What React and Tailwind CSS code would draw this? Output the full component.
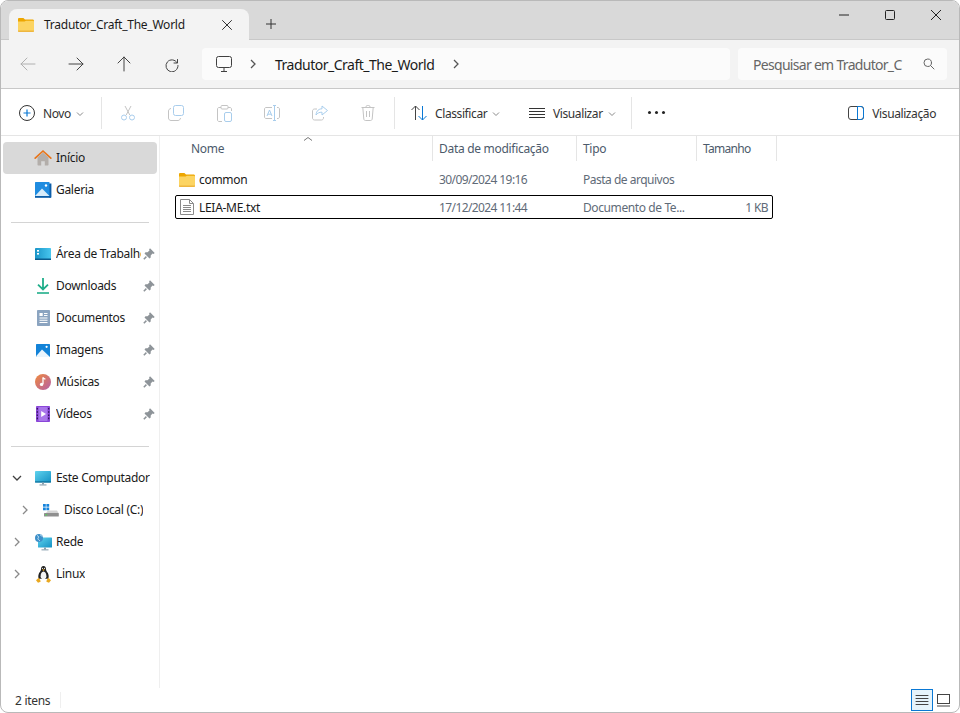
import React from "react";

const Line = ({ d, size = 16, color = "#4a4a4a", w = 1, vb = 16 }) => (
  <svg width={size} height={size} viewBox={`0 0 ${vb} ${vb}`} fill="none" stroke={color} strokeWidth={w} strokeLinecap="round" strokeLinejoin="round" className="block shrink-0">
    <path d={d} />
  </svg>
);

const Folder = ({ w = 16, h = 14 }) => (
  <svg width={w} height={h} viewBox="0 0 16 14" className="block shrink-0">
    <path d="M0 1.2C0 .5.5 0 1.2 0h4.2l1.6 1.6H14.6c.8 0 1.4.6 1.4 1.4V5H0z" fill="#eda600" />
    <path d="M0 3.6h6.6L8 2.8h6.8c.7 0 1.2.5 1.2 1.2v8.8c0 .7-.5 1.2-1.2 1.2H1.2C.5 14 0 13.5 0 12.8z" fill="#fcd462" />
    <path d="M0 12.6V13c0 .5.5 1 1.2 1h13.6c.7 0 1.2-.5 1.2-1v-.4z" fill="#eeb63f" />
  </svg>
);

const Chevron = ({ color = "#8a8a8a" }) => (
  <svg width="8" height="8" viewBox="0 0 8 8" fill="none" stroke={color} strokeWidth="1" className="block shrink-0">
    <path d="M1 2.5 4 5.5 7 2.5" />
  </svg>
);

const Home = () => (
  <svg width="18" height="18" viewBox="0 0 18 18" className="block shrink-0">
    <path d="M3.5 8.5 9 3.5l5.5 5v7.2c0 .4-.3.8-.8.8h-2.9v-4.2H7.2v4.2H4.3c-.5 0-.8-.4-.8-.8z" fill="#b3aeaa" />
    <path d="M1.2 9.2 9 2l7.8 7.2" fill="none" stroke="#e8751a" strokeWidth="1.7" strokeLinecap="round" strokeLinejoin="round" />
  </svg>
);

const Gallery = () => (
  <svg width="17" height="16" viewBox="0 0 17 16" className="block shrink-0">
    <rect x="14" y="1.5" width="2.4" height="14" fill="#0c5da8" />
    <rect x="0" y="14" width="16" height="1.8" fill="#0c5da8" />
    <rect x="0" y="0" width="14.5" height="14" rx=".6" fill="#1f8ce0" />
    <path d="M0 14 7 6.5 14.5 14z" fill="#d8ecfa" />
    <circle cx="11" cy="3.5" r="1.2" fill="#fff" />
  </svg>
);

const Desktop = () => (
  <svg width="16" height="12" viewBox="0 0 16 12" className="block shrink-0">
    <defs>
      <linearGradient id="dk" x1="0" y1="0" x2="1" y2="0">
        <stop offset="0" stopColor="#1a95c8" />
        <stop offset="1" stopColor="#48c6ee" />
      </linearGradient>
    </defs>
    <rect width="16" height="11.5" rx=".8" fill="url(#dk)" />
    <rect x="2" y="2" width="2" height="1.6" fill="#fff" />
    <rect x="2" y="5" width="2" height="1.6" fill="#fff" />
    <rect y="10.5" width="16" height="1.5" fill="#0b5c8e" />
  </svg>
);

const Download = () => (
  <svg width="14" height="16" viewBox="0 0 14 16" fill="none" stroke="#1fae8a" strokeWidth="1.8" className="block shrink-0">
    <path d="M7 0v11M2 6.6 7 11.4l5-4.8" />
    <path d="M1 15h12" stroke="#1fae8a" strokeWidth="1.6" />
  </svg>
);

const Docs = () => (
  <svg width="13" height="16" viewBox="0 0 13 16" className="block shrink-0">
    <rect width="13" height="16" rx=".8" fill="#8ba4c0" />
    <path d="M2.5 3h3.2v3H2.5zM7 3h3.5v1H7zM7 5h3.5v1H7zM2.5 7.5h8v1h-8zM2.5 9.8h8v1h-8zM2.5 12h8v1h-8z" fill="#fff" />
  </svg>
);

const Images = () => (
  <svg width="14" height="13" viewBox="0 0 14 13" className="block shrink-0">
    <rect width="14" height="13" rx=".6" fill="#1383d8" />
    <path d="M0 12.2 6 5.4 14 13H.6z" fill="#eaf5fd" />
    <circle cx="10.6" cy="2.8" r="1.1" fill="#fff" />
  </svg>
);

const Music = () => (
  <svg width="16" height="16" viewBox="0 0 16 16" className="block shrink-0">
    <defs>
      <linearGradient id="mu" x1="0" y1="0" x2="1" y2="1">
        <stop offset="0" stopColor="#f08a3c" />
        <stop offset="1" stopColor="#b45fa8" />
      </linearGradient>
    </defs>
    <circle cx="8" cy="8" r="8" fill="url(#mu)" />
    <path d="M8 3.5v6.6" stroke="#fff" strokeWidth="1.3" />
    <circle cx="6.6" cy="10.4" r="1.7" fill="#fff" />
    <path d="M8 3.5c.5 1.3 1.6 1.5 2.4 1.7" stroke="#fff" strokeWidth="1.3" fill="none" />
  </svg>
);

const Videos = () => (
  <svg width="14" height="16" viewBox="0 0 14 16" className="block shrink-0">
    <rect width="14" height="16" rx=".8" fill="#8a46d8" />
    <rect x="2.6" y="1" width="8.8" height="14" fill="#a975ea" />
    <path d="M5.2 5v6l4.8-3z" fill="#fff" />
    <path d="M.7 2h1.2v1.6H.7zM.7 5.2h1.2v1.6H.7zM.7 8.4h1.2V10H.7zM.7 11.6h1.2v1.6H.7zM12.1 2h1.2v1.6h-1.2zM12.1 5.2h1.2v1.6h-1.2zM12.1 8.4h1.2V10h-1.2zM12.1 11.6h1.2v1.6h-1.2z" fill="#2a1050" />
  </svg>
);

const Computer = () => (
  <svg width="16" height="15" viewBox="0 0 16 15" className="block shrink-0">
    <defs>
      <linearGradient id="pc" x1="0" y1="0" x2="1" y2="1">
        <stop offset="0" stopColor="#5fd3ee" />
        <stop offset="1" stopColor="#1591c4" />
      </linearGradient>
    </defs>
    <rect width="16" height="11.5" rx=".8" fill="url(#pc)" />
    <rect y="10.4" width="16" height="1.1" fill="#0d6a96" />
    <rect x="7" y="11.5" width="2" height="2" fill="#8aa0ae" />
    <rect x="4.5" y="13.4" width="7" height="1.1" fill="#8aa0ae" />
  </svg>
);

const Disk = () => (
  <svg width="16" height="13" viewBox="0 0 16 13" className="block shrink-0">
    <path d="M0 0h2.8v2.8H0zM3.4 0h2.8v2.8H3.4zM0 3.4h2.8v2.8H0zM3.4 3.4h2.8v2.8H3.4z" fill="#1684dc" />
    <path d="M3 9 5 6.5h9L15.500 9z" fill="#d4d4d4" />
    <rect x="1" y="9" width="14.800" height="3.400" rx=".5" fill="#8f8f8f" />
    <rect x="2.500" y="10.200" width="1.600" height="1.200" fill="#4ade50" />
  </svg>
);

const Network = () => (
  <svg width="17" height="17" viewBox="0 0 17 17" className="block shrink-0">
    <defs>
      <linearGradient id="nt" x1="0" y1="0" x2="1" y2="1">
        <stop offset="0" stopColor="#5fd3ee" />
        <stop offset="1" stopColor="#1591c4" />
      </linearGradient>
    </defs>
    <rect x="3" y="3.500" width="14" height="10" rx=".6" fill="url(#nt)" />
    <rect x="9" y="13.500" width="2" height="2" fill="#8aa0ae" />
    <rect x="6.500" y="15.300" width="7" height="1.100" fill="#8aa0ae" />
    <circle cx="4" cy="4" r="4" fill="#3d8fc9" />
    <path d="M2 1.500c1.500.6 2 1.400 1.200 2.400s.4 2 1.600 2.800M5 .6c.8 1 1.600 1.400 2.600 1.600" stroke="#d4ecf8" strokeWidth=".9" fill="none" />
  </svg>
);

const Tux = () => (
  <svg width="15" height="17" viewBox="0 0 15 17" className="block shrink-0">
    <path d="M7.500 0C5.600 0 5 1.500 5 3.200c0 1.400-1.200 2.400-2 4C2.200 9 2 11 2.800 12.800h9.400C13 11 12.800 9 12 7.200c-.8-1.600-2-2.600-2-4C10 1.500 9.400 0 7.500 0z" fill="#222" />
    <path d="M7.500 5.500C5.600 5.500 4.600 8 4.600 10.200c0 1.600 1 3 2.900 3s2.900-1.400 2.900-3C10.400 8 9.400 5.500 7.500 5.500z" fill="#f4f4f4" />
    <path d="M6.200 3.800 7.500 3.200l1.300.6-1.300 1.200z" fill="#e9a820" />
    <circle cx="6.500" cy="2.300" r=".6" fill="#fff" />
    <circle cx="8.500" cy="2.300" r=".6" fill="#fff" />
    <path d="M0 14.200 2.800 11.800l1.600 2.600.2 1.400-2.600 1zM15 14.200 12.200 11.800l-1.600 2.600-.2 1.400 2.600 1z" fill="#e9a820" />
  </svg>
);

const Pin = () => (
  <svg width="12" height="12" viewBox="0 0 12 12" className="block shrink-0">
    <path d="M7 .3 11.700 5 10.500 5.900 9.500 5.500 7.700 7.500 7.700 9.500 6.500 10.500 1.500 5.500 2.500 4.300 4.500 4.300 6.500 2.500 6.100 1.500z" fill="#8e9499" />
    <path d="M3.400 8.600.8 11.200" stroke="#8e9499" strokeWidth="1.500" />
  </svg>
);

const SideRight = ({ color = "#7a7a7a" }) => (
  <svg width="8" height="12" viewBox="0 0 8 12" fill="none" stroke={color} strokeWidth="1.300" className="block">
    <path d="M2 2 6 6 2 10" />
  </svg>
);

const SideDown = () => (
  <svg width="12" height="8" viewBox="0 0 12 8" fill="none" stroke="#404040" strokeWidth="1.300" className="block">
    <path d="M2 2 6 6 10 2" />
  </svg>
);

function NavItem({ icon, label, pinned, arrow, indent, active }) {
  return (
    <div className={`flex h-8 items-center rounded pl-[2px] ${active ? "bg-[#d9d9d9]" : ""} ${indent ? "ml-2" : ""}`}>
      <div className="flex h-8 w-6 shrink-0 items-center justify-center">
        {arrow === "right" && <SideRight color="#8a8a8a" />}
        {arrow === "down" && <SideDown />}
      </div>
      <div className="ml-[6px] flex w-4 shrink-0 items-center justify-center">{icon}</div>
      <span className={`ml-[5px] overflow-hidden whitespace-nowrap text-[12px] text-[#1a1a1a] ${pinned ? "w-[85px]" : ""}`}>{label}</span>
      {pinned && <span className="ml-[2px]"><Pin /></span>}
    </div>
  );
}

const Divider = () => <div className="mb-[15px] ml-2 mr-2 mt-4 h-px bg-[#d4d4d4]" />;
const ToolSep = () => <div className="h-8 w-px shrink-0 bg-[#e5e5e5]" />;

const ToolSlot = ({ children }) => <div className="flex h-full w-12 shrink-0 items-center justify-center">{children}</div>;

const D = "#a8cdec";
const G = "#c4c4c4";

function Cut() {
  return (
    <svg width="16" height="16" viewBox="0 0 16 16" fill="none" strokeWidth="1" className="block">
      <path d="M5 1 9.800 10M11 1 6.200 10" stroke={G} />
      <circle cx="4" cy="12.500" r="2.500" stroke={D} />
      <circle cx="12" cy="12.500" r="2.500" stroke={D} />
    </svg>
  );
}
function Copy() {
  return (
    <svg width="16" height="16" viewBox="0 0 16 16" fill="none" strokeWidth="1" className="block">
      <rect x="5.500" y=".5" width="10" height="10" rx="2" stroke={D} />
      <path d="M3 3.500c-1.500.2-2.500 1.200-2.500 2.500v7c0 1.400 1.100 2.500 2.500 2.500h7c1.300 0 2.300-1 2.500-2.500" stroke={G} />
    </svg>
  );
}
function Paste() {
  return (
    <svg width="15" height="17" viewBox="0 0 15 17" fill="none" strokeWidth="1" className="block">
      <path d="M4 2.500H2C1.200 2.500.5 3.200.5 4v11c0 .8.700 1.500 1.500 1.500h3M11 2.500h2c.8 0 1.500.7 1.500 1.500v2" stroke={G} />
      <rect x="4" y=".5" width="7" height="3.500" rx="1" stroke={G} />
      <rect x="7.500" y="7.500" width="7" height="9" rx="1.500" stroke={D} />
    </svg>
  );
}
function Rename() {
  return (
    <svg width="16" height="16" viewBox="0 0 16 16" fill="none" strokeWidth="1" className="block">
      <path d="M8 2.500H2C1.200 2.500.5 3.200.5 4v8c0 .8.700 1.500 1.500 1.500h6M13 2.500h1c.8 0 1.500.7 1.500 1.500v8c0 .8-.7 1.500-1.500 1.500h-1" stroke={G} />
      <path d="M9 .5h3M9 15.500h3M10.500.5v15" stroke={D} />
      <path d="M3 11 5.500 5 8 11M3.800 9.200h3.400" stroke={D} />
    </svg>
  );
}
function Share() {
  return (
    <svg width="16" height="16" viewBox="0 0 16 16" fill="none" strokeWidth="1" strokeLinejoin="round" className="block">
      <path d="M5 4H2.500C1.400 4 .5 4.900.5 6v7c0 1.100.9 2 2 2h7c1.100 0 2-.9 2-2v-1" stroke={G} />
      <path d="M10 1v2.800C7 3.800 4.500 5.500 4 10c1.500-2 3.300-2.800 6-2.800V10l5.500-4.500z" stroke={D} />
    </svg>
  );
}
function Trash() {
  return (
    <svg width="14" height="16" viewBox="0 0 14 16" fill="none" stroke={G} strokeWidth="1" className="block">
      <path d="M.5 2.500h13M5 2.500V1.800C5 1 5.600.5 6.300.5h1.400C8.400.5 9 1 9 1.800v.7M1.800 2.500 2.800 14c.1.800.7 1.500 1.500 1.500h5.400c.8 0 1.400-.7 1.500-1.500l1-11.500M5.500 6v6M8.500 6v6" />
    </svg>
  );
}

const CmdText = ({ children }) => (
  <span className="ml-2 mt-px whitespace-nowrap text-[12px] tracking-[-0.4px] text-[#333]">{children}</span>
);

export default function App() {
  return (
    <div className="h-[713px] w-[960px] overflow-hidden bg-white font-['Noto_Sans',sans-serif] text-[12px] tracking-[-0.3px]">
      <div className="flex h-full w-full flex-col overflow-hidden rounded-lg border border-[#b9b9b9] bg-white">
        {/* Title bar */}
        <div className="flex h-[39px] shrink-0 items-end border-b border-[#c8c8c8] bg-[#d9d9d9]">
          <div className="-mb-px ml-2 flex h-[31px] w-[240px] items-center rounded-t-lg bg-[#f3f3f3]">
            <span className="ml-[9px]"><Folder /></span>
            <span className="ml-[10px] w-[177px] whitespace-nowrap text-[12px] tracking-[-0.25px] text-[#1a1a1a]">Tradutor_Craft_The_World</span>
            <span className="ml-[1px]">
              <Line size={10} vb={10} color="#333" d="M.5.5l9 9M9.500.5l-9 9" />
            </span>
          </div>
          <div className="ml-[17px] flex h-[30px] items-center">
            <Line size={10} vb={10} color="#333" d="M5 0v10M0 5h10" />
          </div>
          <div className="ml-auto flex h-7 items-center self-start">
            <div className="flex h-7 w-[46px] items-center justify-center">
              <Line size={10} vb={10} color="#222" d="M0 5h10" />
            </div>
            <div className="flex h-7 w-[46px] items-center justify-center">
              <svg width="10" height="10" viewBox="0 0 10 10" fill="none" stroke="#222" className="block"><rect x=".5" y=".5" width="9" height="9" rx="1" /></svg>
            </div>
            <div className="flex h-7 w-[46px] items-center justify-center">
              <Line size={10} vb={10} color="#222" d="M0 0l10 10M10 0 0 10" />
            </div>
          </div>
        </div>

        {/* Address bar */}
        <div className="flex h-[49px] shrink-0 items-center border-b border-[#c8c8c8] bg-[#f3f3f3] pl-[3px]">
          <div className="flex w-12 justify-center"><Line color="#b0b0b0" d="M1 8h14M7 2 1 8l6 6" /></div>
          <div className="flex w-12 justify-center"><Line color="#444" d="M1 8h14M9 2l6 6-6 6" /></div>
          <div className="flex w-12 justify-center"><Line color="#444" d="M8 15V1M2 7l6-6 6 6" /></div>
          <div className="flex w-12 justify-center"><Line color="#444" d="M13.500 3.500v3.500H10M13.200 6.800A6 6 0 1 0 14 9.500" /></div>
          <div className="ml-[6px] flex h-8 w-[528px] items-center rounded bg-[#fbfbfb] pl-[14px]">
            <svg width="16" height="16" viewBox="0 0 16 16" fill="none" stroke="#404040" className="block shrink-0">
              <rect x=".5" y=".5" width="15" height="11" rx="2" />
              <path d="M5 15.500h6M8 11.500v4" />
            </svg>
            <span className="ml-[17px]"><SideRight color="#555" /></span>
            <span className="ml-[18px] whitespace-nowrap text-[14px] tracking-[-0.5px] text-[#1a1a1a]">Tradutor_Craft_The_World</span>
            <span className="ml-[18px]"><SideRight color="#555" /></span>
          </div>
          <div className="ml-2 flex h-8 w-[209px] items-center rounded bg-[#fbfbfb] pl-[15px]">
            <span className="w-[150px] whitespace-nowrap text-[14px] tracking-[-0.7px] text-[#666]">Pesquisar em Tradutor_C</span>
            <span className="ml-[20px]">
              <Line size={12} vb={12} color="#666" d="M11 11 7.700 7.700M8.500 4.750a3.750 3.750 0 1 1-7.500 0 3.750 3.750 0 0 1 7.500 0z" />
            </span>
          </div>
        </div>

        {/* Command bar */}
        <div className="flex h-[47px] shrink-0 items-center border-b border-[#e5e5e5] bg-white pt-[2px]">
          <div className="flex h-full w-[100px] shrink-0 items-center pl-[18px]">
            <svg width="16" height="16" viewBox="0 0 16 16" fill="none" className="block shrink-0">
              <circle cx="8" cy="8" r="7.500" stroke="#333" />
              <path d="M8 4.500v7M4.500 8h7" stroke="#0a78d4" strokeWidth="1.200" />
            </svg>
            <CmdText>Novo</CmdText>
            <span className="ml-[5px] mt-px"><Chevron /></span>
          </div>
          <ToolSep />
          <div className="ml-[2px] flex h-full">
            <ToolSlot><Cut /></ToolSlot>
            <ToolSlot><Copy /></ToolSlot>
            <ToolSlot><Paste /></ToolSlot>
            <ToolSlot><Rename /></ToolSlot>
            <ToolSlot><Share /></ToolSlot>
            <ToolSlot><Trash /></ToolSlot>
          </div>
          <div className="ml-[2px]"><ToolSep /></div>
          <div className="flex h-full w-[118px] shrink-0 items-center pl-[16px]">
            <svg width="16" height="16" viewBox="0 0 16 16" fill="none" className="block shrink-0">
              <path d="M4.500 15V1M.5 5l4-4 4 4" stroke="#444" />
              <path d="M11.500 1v14M7.500 11l4 4 4-4" stroke="#0a78d4" />
            </svg>
            <CmdText>Classificar</CmdText>
            <span className="ml-[5px] mt-px"><Chevron /></span>
          </div>
          <div className="flex h-full w-[118px] shrink-0 items-center pl-[16px]">
            <Line color="#333" d="M0 3.500h16M0 6.500h16M0 9.500h16M0 12.500h16" />
            <CmdText>Visualizar</CmdText>
            <span className="ml-[5px] mt-px"><Chevron /></span>
          </div>
          <ToolSep />
          <div className="mb-[2px] flex h-full w-12 shrink-0 items-center justify-center gap-[4px]">
            <span className="h-[3px] w-[3px] rounded-full bg-[#222]" />
            <span className="h-[3px] w-[3px] rounded-full bg-[#222]" />
            <span className="h-[3px] w-[3px] rounded-full bg-[#222]" />
          </div>
          <div className="ml-auto flex items-center pr-[23px]">
            <svg width="16" height="14" viewBox="0 0 16 14" fill="none" className="block shrink-0">
              <rect x=".5" y=".5" width="15" height="13" rx="2.500" stroke="#444" />
              <path d="M9.500.5H13c1.400 0 2.500 1.100 2.500 2.500v8c0 1.400-1.100 2.500-2.500 2.500H9.500z" stroke="#0a78d4" />
            </svg>
            <CmdText>Visualização</CmdText>
          </div>
        </div>

        {/* Body */}
        <div className="flex min-h-0 flex-1">
          <div className="flex w-[159px] shrink-0 flex-col border-r border-[#efefef] pt-[6px]">
            <div className="pl-[2px] pr-[2px]">
              <NavItem active icon={<Home />} label="Início" />
              <NavItem icon={<Gallery />} label="Galeria" />
              <Divider />
              <NavItem pinned icon={<Desktop />} label="Área de Trabalho" />
              <NavItem pinned icon={<Download />} label="Downloads" />
              <NavItem pinned icon={<Docs />} label="Documentos" />
              <NavItem pinned icon={<Images />} label="Imagens" />
              <NavItem pinned icon={<Music />} label="Músicas" />
              <NavItem pinned icon={<Videos />} label="Vídeos" />
              <Divider />
              <NavItem arrow="down" icon={<Computer />} label="Este Computador" />
              <NavItem indent arrow="right" icon={<Disk />} label="Disco Local (C:)" />
              <NavItem arrow="right" icon={<Network />} label="Rede" />
              <NavItem arrow="right" icon={<Tux />} label="Linux" />
            </div>
          </div>

          <div className="min-w-0 flex-1">
            <div className="flex h-[25px] text-[12px] text-[#4c5a6b]">
              <div className="relative flex w-[273px] items-center border-r border-[#e5e5e5] pl-[31px]">
                Nome
                <svg width="10" height="6" viewBox="0 0 10 6" fill="none" stroke="#777" className="absolute left-[143px] top-0 block">
                  <path d="M1 4.500 5 1.500l4 3" />
                </svg>
              </div>
              <div className="flex w-[144px] items-center whitespace-nowrap border-r border-[#e5e5e5] pl-[6px]">Data de modificação</div>
              <div className="flex w-[120px] items-center border-r border-[#e5e5e5] pl-[6px]">Tipo</div>
              <div className="flex w-[80px] items-center border-r border-[#e5e5e5] pl-[6px] tracking-[-0.7px]">Tamanho</div>
            </div>

            <div className="ml-[15px] mt-[7px] flex w-[598px] flex-col gap-[3px] text-[12px]">
              <div className="flex h-6 items-center rounded-[2px] border border-transparent">
                <span className="ml-[3px] w-4"><Folder /></span>
                <span className="ml-1 w-[240px] text-[#1a1a1a]">common</span>
                <span className="w-[144px] tracking-[-0.6px] text-[#5f6b78]">30/09/2024 19:16</span>
                <span className="w-[120px] tracking-[-0.5px] text-[#5f6b78]">Pasta de arquivos</span>
              </div>
              <div className="flex h-6 items-center rounded-[2px] border border-black">
                <span className="ml-[4px] w-[15px]">
                  <svg width="14" height="16" viewBox="0 0 14 16" fill="none" stroke="#8a8a8a" className="block">
                    <path d="M.5.5h9l4 4v11H.5z" fill="#fff" />
                    <path d="M9.500.5v4h4M3 6.500h8M3 8.500h8M3 10.500h8M3 12.500h8" />
                  </svg>
                </span>
                <span className="ml-1 mt-px w-[240px] text-[#1a1a1a]">LEIA-ME.txt</span>
                <span className="mt-px w-[144px] tracking-[-0.6px] text-[#5f6b78]">17/12/2024 11:44</span>
                <span className="mt-px w-[120px] whitespace-nowrap tracking-[-0.4px] text-[#5f6b78]">Documento de Te...</span>
                <span className="mt-px w-[65px] text-right tracking-[-0.6px] text-[#5f6b78]">1 KB</span>
              </div>
            </div>
          </div>
        </div>

        {/* Status bar */}
        <div className="flex h-6 shrink-0 items-center">
          <span className="ml-[14px] mt-[2px] text-[12px] text-[#333]">2 itens</span>
          <div className="ml-[10px] h-4 w-px bg-[#efefef]" />
          <div className="ml-auto flex items-center pr-[9px]">
            <div className="flex h-[22px] w-[22px] items-center justify-center border border-[#0a78d4] bg-[#e5f3fb]">
              <Line size={14} vb={14} color="#444" d="M1 2.500h12M1 5.500h12M1 8.500h12M1 11.500h12" />
            </div>
            <div className="ml-[3px] flex h-[22px] w-[14px] items-center justify-center">
              <svg width="13" height="13" viewBox="0 0 13 13" fill="none" stroke="#444" className="block">
                <rect x=".5" y=".5" width="12" height="9" />
                <path d="M0 12h13" />
              </svg>
            </div>
          </div>
        </div>
      </div>
    </div>
  );
}
